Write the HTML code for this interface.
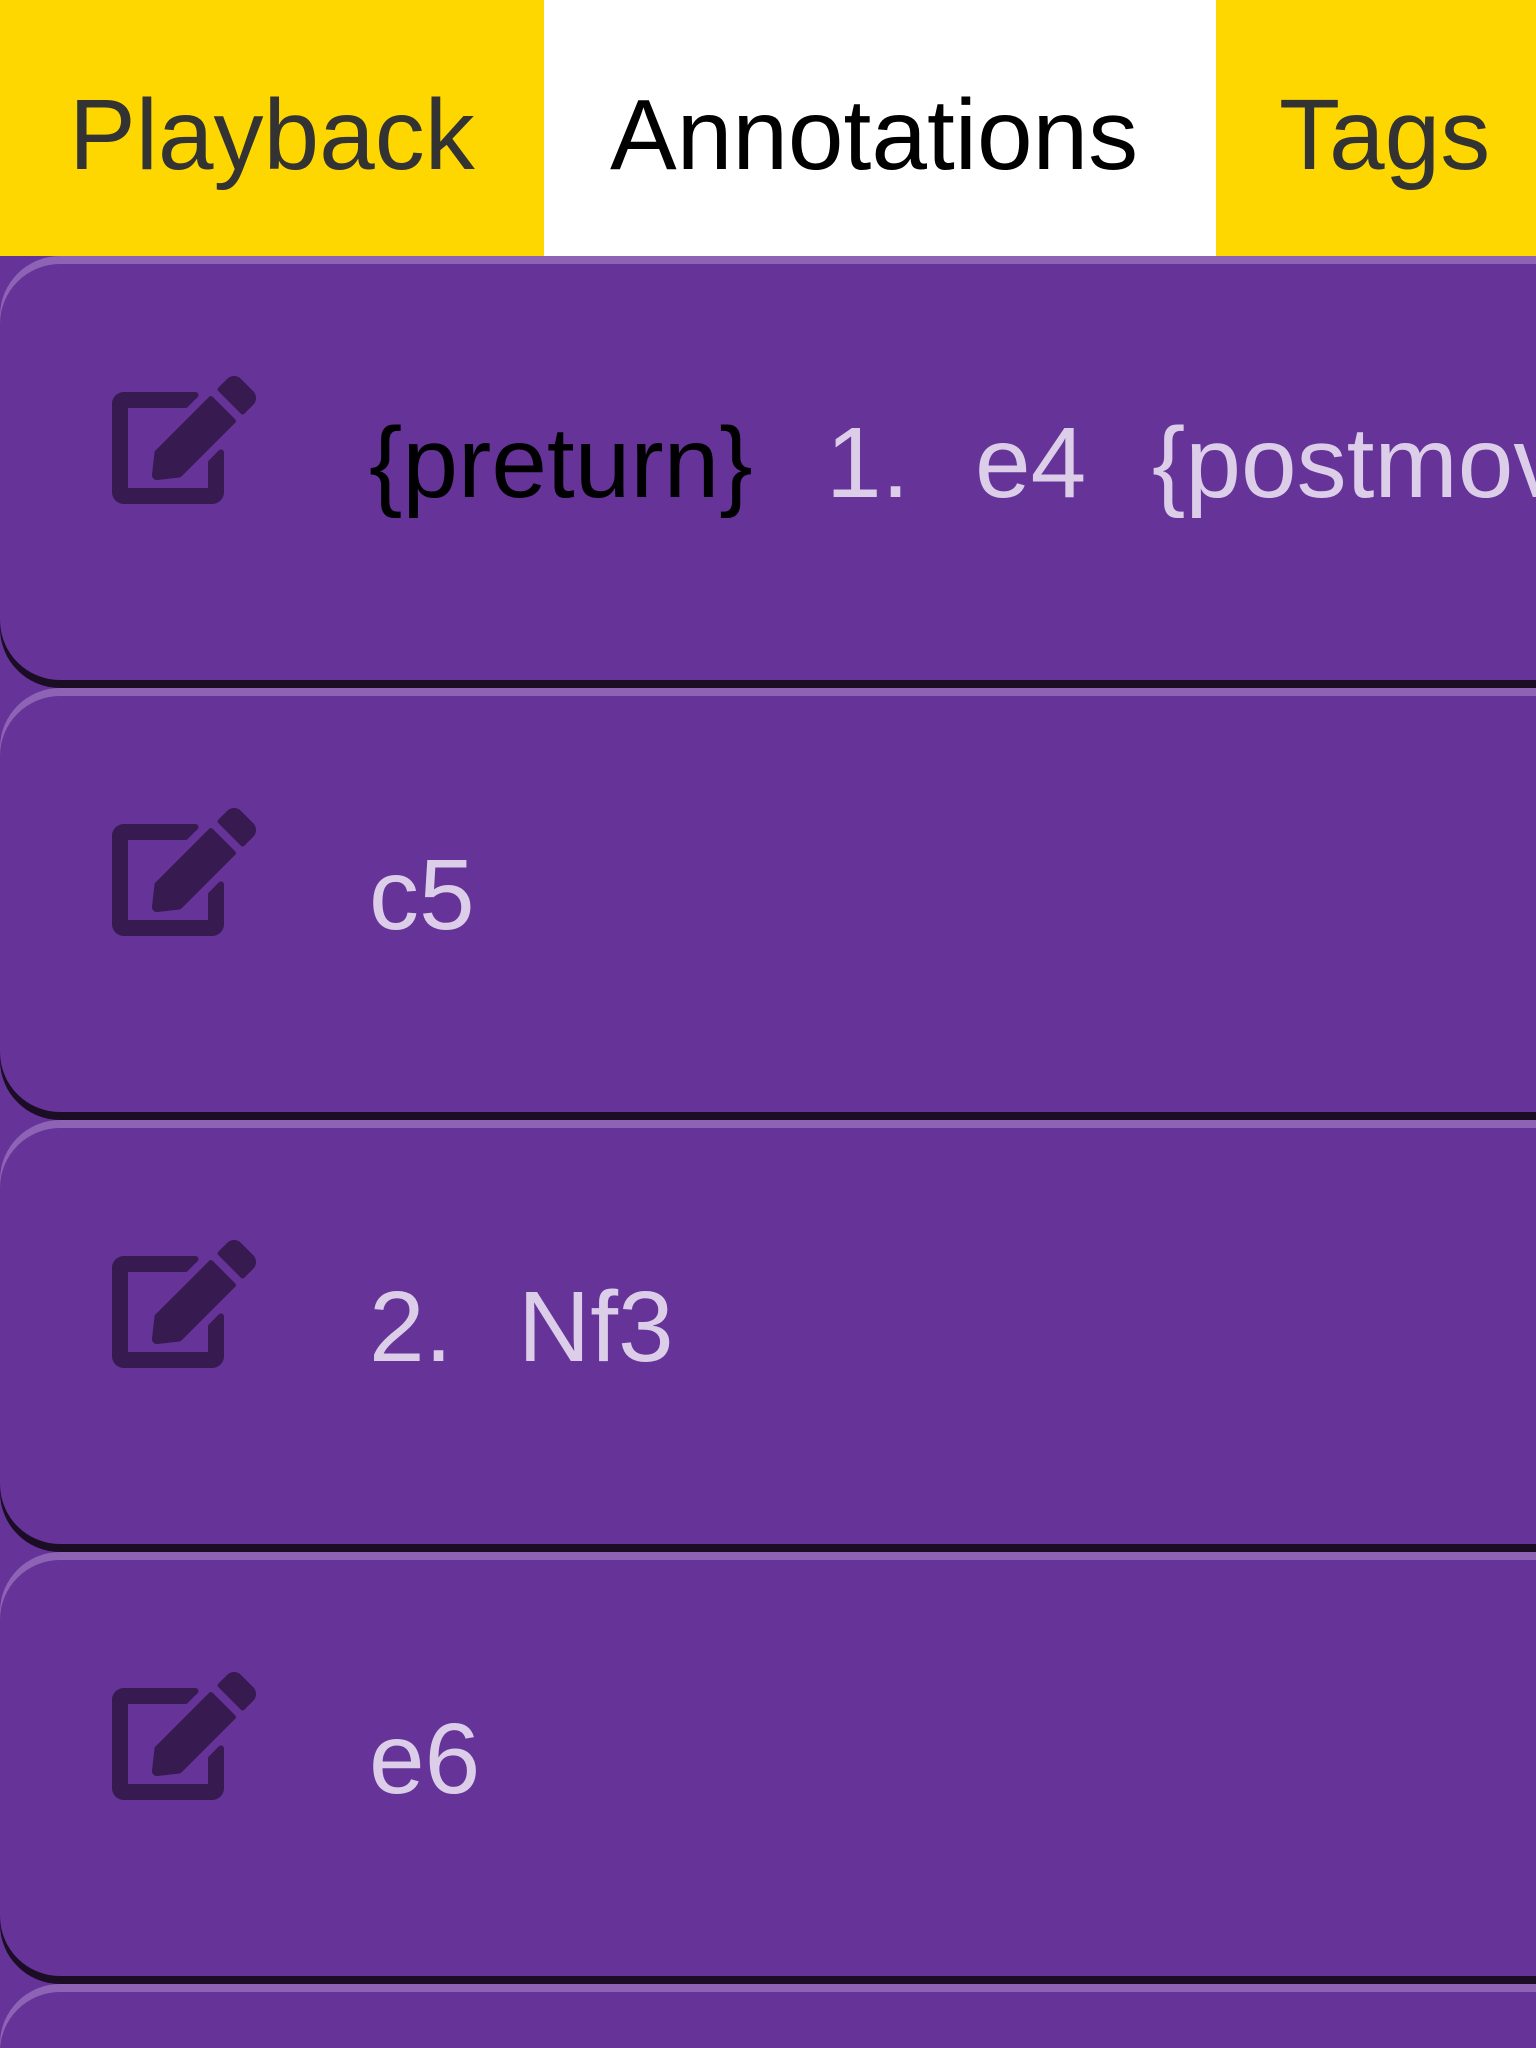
<!DOCTYPE html>
<html><head><meta charset="utf-8"><style>
*{margin:0;padding:0;box-sizing:border-box}
html,body{width:1536px;height:2048px;overflow:hidden;background:#663399;font-family:"Liberation Sans",sans-serif}
.tabs{position:absolute;left:0;top:0;width:1536px;height:256px;background:#ffd700;overflow:hidden}
.tab{position:absolute;top:0;height:256px;font-size:100px;line-height:100px;color:#333;overflow:hidden}
.tab span{position:absolute;top:85px;white-space:nowrap}
.row{position:absolute;left:0;width:1536px;height:432px;background:#663399;border-radius:60px 0 0 60px;box-shadow:inset 0 8px 0 #8e63b5,inset 0 -8px 0 #1a0d24;overflow:hidden}
.row svg{position:absolute;left:112px;top:120px;width:144px;height:128px}
.t{position:absolute;top:157px;font-size:100px;line-height:100px;color:#dccde9;white-space:nowrap}
</style></head><body>
<div class="tabs">
 <div class="tab" style="left:0;width:544px"><span style="left:69px">Playback</span></div>
 <div class="tab" style="left:544px;width:672px;background:#fff;color:#000"><span style="left:66px">Annotations</span></div>
 <div class="tab" style="left:1216px;width:320px"><span style="left:63px">Tags</span></div>
</div>

<div class="row" style="top:256px">
 <svg viewBox="0 0 576 512"><path fill="#371a4f" d="M402.6 83.2l90.2 90.2c3.8 3.8 3.8 10 0 13.8L274.4 405.6l-92.8 10.3c-12.4 1.4-22.9-9.1-21.5-21.5l10.3-92.8L388.8 83.2c3.8-3.8 10-3.8 13.8 0zm162-22.9l-48.8-48.8c-15.2-15.2-39.9-15.2-55.2 0l-35.4 35.4c-3.8 3.8-3.8 10 0 13.8l90.2 90.2c3.8 3.8 10 3.8 13.8 0l35.4-35.4c15.2-15.3 15.2-40 0-55.2zM384 346.2V448H64V128h229.8c3.2 0 6.2-1.3 8.5-3.5l40-40c7.6-7.6 2.2-20.5-8.5-20.5H48C21.5 64 0 85.5 0 112v352c0 26.5 21.5 48 48 48h352c26.5 0 48-21.5 48-48V306.2c0-10.7-12.9-16-20.5-8.5l-40 40c-2.2 2.3-3.5 5.3-3.5 8.5z"/></svg>
 <span class="t" style="left:369px;color:#000">{preturn}</span>
 <span class="t" style="left:826px">1.</span>
 <span class="t" style="left:975px">e4</span>
 <span class="t" style="left:1152px">{postmove}</span>
</div>

<div class="row" style="top:688px">
 <svg viewBox="0 0 576 512"><path fill="#371a4f" d="M402.6 83.2l90.2 90.2c3.8 3.8 3.8 10 0 13.8L274.4 405.6l-92.8 10.3c-12.4 1.4-22.9-9.1-21.5-21.5l10.3-92.8L388.8 83.2c3.8-3.8 10-3.8 13.8 0zm162-22.9l-48.8-48.8c-15.2-15.2-39.9-15.2-55.2 0l-35.4 35.4c-3.8 3.8-3.8 10 0 13.8l90.2 90.2c3.8 3.8 10 3.8 13.8 0l35.4-35.4c15.2-15.3 15.2-40 0-55.2zM384 346.2V448H64V128h229.8c3.2 0 6.2-1.3 8.5-3.5l40-40c7.6-7.6 2.2-20.5-8.5-20.5H48C21.5 64 0 85.5 0 112v352c0 26.5 21.5 48 48 48h352c26.5 0 48-21.5 48-48V306.2c0-10.7-12.9-16-20.5-8.5l-40 40c-2.2 2.3-3.5 5.3-3.5 8.5z"/></svg>
 <span class="t" style="left:369px">c5</span>
</div>

<div class="row" style="top:1120px">
 <svg viewBox="0 0 576 512"><path fill="#371a4f" d="M402.6 83.2l90.2 90.2c3.8 3.8 3.8 10 0 13.8L274.4 405.6l-92.8 10.3c-12.4 1.4-22.9-9.1-21.5-21.5l10.3-92.8L388.8 83.2c3.8-3.8 10-3.8 13.8 0zm162-22.9l-48.8-48.8c-15.2-15.2-39.9-15.2-55.2 0l-35.4 35.4c-3.8 3.8-3.8 10 0 13.8l90.2 90.2c3.8 3.8 10 3.8 13.8 0l35.4-35.4c15.2-15.3 15.2-40 0-55.2zM384 346.2V448H64V128h229.8c3.2 0 6.2-1.3 8.5-3.5l40-40c7.6-7.6 2.2-20.5-8.5-20.5H48C21.5 64 0 85.5 0 112v352c0 26.5 21.5 48 48 48h352c26.5 0 48-21.5 48-48V306.2c0-10.7-12.9-16-20.5-8.5l-40 40c-2.2 2.3-3.5 5.3-3.5 8.5z"/></svg>
 <span class="t" style="left:369px">2.</span>
 <span class="t" style="left:518px">Nf3</span>
</div>

<div class="row" style="top:1552px">
 <svg viewBox="0 0 576 512"><path fill="#371a4f" d="M402.6 83.2l90.2 90.2c3.8 3.8 3.8 10 0 13.8L274.4 405.6l-92.8 10.3c-12.4 1.4-22.9-9.1-21.5-21.5l10.3-92.8L388.8 83.2c3.8-3.8 10-3.8 13.8 0zm162-22.9l-48.8-48.8c-15.2-15.2-39.9-15.2-55.2 0l-35.4 35.4c-3.8 3.8-3.8 10 0 13.8l90.2 90.2c3.8 3.8 10 3.8 13.8 0l35.4-35.4c15.2-15.3 15.2-40 0-55.2zM384 346.2V448H64V128h229.8c3.2 0 6.2-1.3 8.5-3.5l40-40c7.6-7.6 2.2-20.5-8.5-20.5H48C21.5 64 0 85.5 0 112v352c0 26.5 21.5 48 48 48h352c26.5 0 48-21.5 48-48V306.2c0-10.7-12.9-16-20.5-8.5l-40 40c-2.2 2.3-3.5 5.3-3.5 8.5z"/></svg>
 <span class="t" style="left:369px">e6</span>
</div>

<div class="row" style="top:1984px;height:64px;border-radius:60px 0 0 0;box-shadow:inset 0 8px 0 #8e63b5"></div>
</body></html>
